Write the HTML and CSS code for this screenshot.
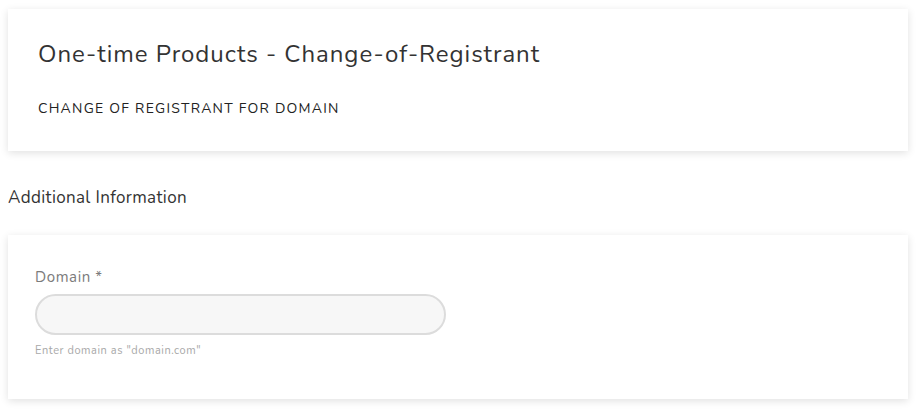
FILE: index.html
```html
<!DOCTYPE html>
<html>
<head>
<meta charset="utf-8">
<link rel="stylesheet" href="styles.css">
</head>
<body>
<div class="page">
  <section class="card head-card">
    <h1 class="title">One-time Products - Change-of-Registrant</h1>
    <p class="subtitle">CHANGE OF REGISTRANT FOR DOMAIN</p>
  </section>
  <h2 class="section-title">Additional Information</h2>
  <section class="card form-card">
    <label class="field-label" for="domain">Domain *</label>
    <input class="field-input" id="domain" type="text">
    <p class="field-help">Enter domain as "domain.com"</p>
  </section>
</div>
</body>
</html>
```
FILE: styles.css
```css
html, body {
  margin: 0;
  padding: 0;
  background: #ffffff;
}
body {
  font-family: "Nunito", "Lato", "Open Sans", sans-serif;
  color: #333333;
}
.page {
  padding: 9px 16px 10px 8px;
  display: flex;
  flex-direction: column;
}
.card {
  background: #ffffff;
  box-shadow: 0 2px 8px rgba(0, 0, 0, 0.12);
}
.head-card {
  padding: 30px 30px 34px 30px;
}
.title {
  margin: 0;
  font-size: 24px;
  font-weight: 400;
  line-height: 30px;
  letter-spacing: 0.98px;
  color: #333333;
}
.subtitle {
  margin: 31px 0 0 0;
  font-size: 14px;
  line-height: 17px;
  letter-spacing: 1.25px;
  color: #222222;
}
.section-title {
  margin: 36px 0 0 0;
  font-size: 17px;
  font-weight: 400;
  line-height: 22px;
  letter-spacing: 0.35px;
  color: #333333;
}
.form-card {
  margin-top: 26px;
  padding: 32px 27px 41px 27px;
  display: flex;
  flex-direction: column;
  align-items: flex-start;
}
.field-label {
  font-size: 15px;
  line-height: 20px;
  letter-spacing: 0.6px;
  color: #7b7b7b;
}
.field-input {
  margin-top: 7px;
  width: 411px;
  height: 41px;
  box-sizing: border-box;
  border: 2px solid #dcdcdc;
  border-radius: 21px;
  background: #f7f7f7;
  outline: none;
  padding: 0 16px;
  font-family: inherit;
}
.field-help {
  margin: 9px 0 0 0;
  font-size: 11px;
  line-height: 14px;
  letter-spacing: 0.56px;
  color: #a8a8a8;
}
```
